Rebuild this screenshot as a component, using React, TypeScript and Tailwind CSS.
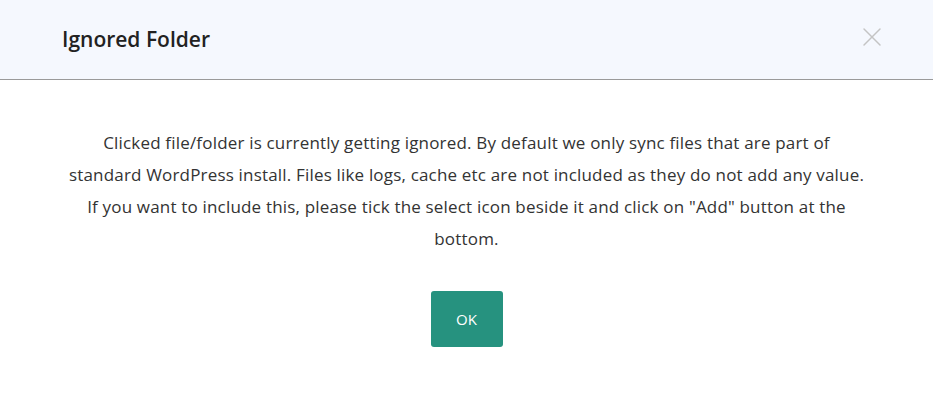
import React from "react";
import { X } from "lucide-react";

function IgnoredFolderModal() {
  return (
    <div className="w-[933px] h-[407px] bg-white font-['Open_Sans',sans-serif]">
      <div className="h-[80px] bg-[#f5f8fe] border-b border-[#9a9a9a] flex items-center justify-between pl-[62px] pr-[45px]">
        <h2 className="text-[21px] font-semibold text-[#222]">Ignored Folder</h2>
        <X className="w-[32px] h-[32px] -mt-[6px] text-[#c4c4c4] cursor-pointer" strokeWidth={1.1} />
      </div>
      <div className="flex flex-col items-center pt-[47px]">
        <p className="text-center text-[17px] leading-[32px] tracking-[0.18px] text-[#333]">
          Clicked file/folder is currently getting ignored. By default we only sync files that are part of
          <br />
          standard WordPress install. Files like logs, cache etc are not included as they do not add any value.
          <br />
          If you want to include this, please tick the select icon beside it and click on "Add" button at the
          <br />
          bottom.
        </p>
        <button className="mt-[36px] w-[72px] h-[56px] rounded-[3px] bg-[#26927f] text-white text-[15px]">
          OK
        </button>
      </div>
    </div>
  );
}

export default function App() {
  return <IgnoredFolderModal />;
}
